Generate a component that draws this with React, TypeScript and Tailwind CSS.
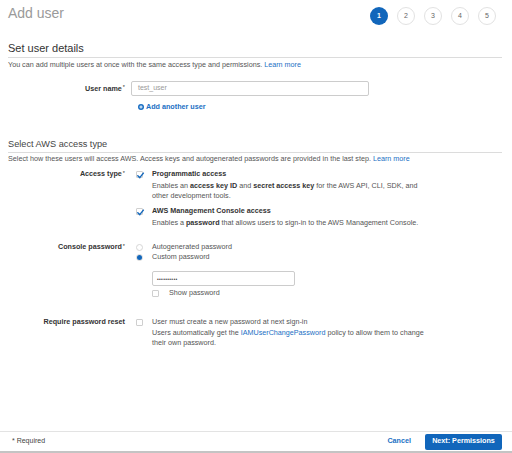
import React from 'react';

const BLUE = 'bg-[#1166bb]';

const Check = ({ checked }: { checked: boolean }) => (
  <span className="relative inline-block w-[7px] h-[7px] border border-[#cfcfcf] rounded-[1px] bg-white shrink-0">
    {checked && (
      <svg viewBox="0 0 10 10" className="absolute -left-[1px] -top-[1px] w-[9px] h-[9px]">
        <path d="M2 5.3 L4.2 7.4 L8.2 2.4" fill="none" stroke="#1166bb" strokeWidth="1.6" strokeLinecap="round" strokeLinejoin="round" />
      </svg>
    )}
  </span>
);

const Radio = ({ checked }: { checked: boolean }) => (
  <span className="inline-flex items-center justify-center w-[7px] h-[7px] rounded-full border border-[#d6d6d6] bg-white shrink-0">
    {checked && <span className={`w-[5px] h-[5px] rounded-full ${BLUE}`} />}
  </span>
);

const Label = ({ text, required }: { text: string; required?: boolean }) => (
  <div className="w-[117px] shrink-0 text-right font-bold text-[7.2px] leading-[10px] text-[#333] whitespace-nowrap">
    {text}
    {required && <span className="text-[5.5px] font-normal relative -top-[1.5px] ml-[1px]">*</span>}
  </div>
);

export default function App() {
  return (
    <div
      className="w-[512px] h-[453px] bg-white flex flex-col text-[#444] overflow-hidden"
      style={{ fontFamily: '"Liberation Sans", Arial, sans-serif' }}
    >
      <div className="flex-1 pl-[8px] pr-[10px]">
        {/* title + steps */}
        <div className="h-[32px] flex justify-between items-start">
          <h1 className="mt-[5px] text-[14px] leading-[16px] text-[#9a9a9a]">Add user</h1>
          <div className="mt-[7px] mr-[6px] flex gap-[9px]">
            {[1, 2, 3, 4, 5].map((n) => (
              <div
                key={n}
                className={
                  n === 1
                    ? `w-[18px] h-[18px] rounded-full ${BLUE} text-white font-bold text-[7px] flex items-center justify-center`
                    : 'w-[18px] h-[18px] rounded-full border border-[#e2e2e2] text-[#666] text-[7px] flex items-center justify-center'
                }
              >
                {n}
              </div>
            ))}
          </div>
        </div>

        {/* set user details */}
        <div className="pt-[10px] pb-[2px] border-b border-[#dcdcdc]">
          <h2 className="text-[11px] leading-[13px] text-[#333]">Set user details</h2>
        </div>
        <p className="mt-[2px] text-[7.2px] leading-[10px] text-[#555]">
          You can add multiple users at once with the same access type and permissions.{' '}
          <span className="text-[#1a6fc4]">Learn more</span>
        </p>

        <div className="mt-[11px] flex items-center gap-[6px]">
          <Label text="User name" required />
          <div className="w-[238px] h-[15px] border border-[#cccccc] rounded-[2px] pl-[6px] flex items-center text-[7px] text-[#999]">
            test_user
          </div>
        </div>
        <div className="mt-[6px] pl-[130px] flex items-center gap-[2px] text-[7.2px] leading-[10px] font-bold text-[#1a6fc4]">
          <svg viewBox="0 0 10 10" className="w-[6px] h-[6px]">
            <circle cx="5" cy="5" r="5" fill="#1a6fc4" />
            <path d="M5 2.3 V7.7 M2.3 5 H7.7" stroke="#fff" strokeWidth="1.6" />
          </svg>
          <span>Add another user</span>
        </div>

        {/* access type */}
        <div className="mt-[27px] pb-[2px] border-b border-[#dcdcdc]">
          <h2 className="text-[9.2px] leading-[11px] text-[#444]">Select AWS access type</h2>
        </div>
        <p className="mt-[1px] text-[7.2px] leading-[10px] text-[#555]">
          Select how these users will access AWS. Access keys and autogenerated passwords are provided in the last step.{' '}
          <span className="text-[#1a6fc4]">Learn more</span>
        </p>

        <div className="mt-[5px] flex items-start gap-[6px]">
          <Label text="Access type" required />
          <div className="text-[7.2px] leading-[10px] text-[#555]">
            <div className="flex items-center gap-[9px] pl-[5px]">
              <Check checked />
              <span className="font-bold text-[#333]">Programmatic access</span>
            </div>
            <div className="mt-[2px] pl-[21px] whitespace-nowrap">
              Enables an <b className="text-[#333]">access key ID</b> and <b className="text-[#333]">secret access key</b> for the AWS API, CLI, SDK, and
              <br />
              other development tools.
            </div>
            <div className="mt-[5px] flex items-center gap-[9px] pl-[5px]">
              <Check checked />
              <span className="font-bold text-[#333]">AWS Management Console access</span>
            </div>
            <div className="mt-[2px] pl-[21px] whitespace-nowrap">
              Enables a <b className="text-[#333]">password</b> that allows users to sign-in to the AWS Management Console.
            </div>
          </div>
        </div>

        <div className="mt-[14px] flex items-start gap-[6px]">
          <Label text="Console password" required />
          <div className="text-[7.2px] leading-[10px] text-[#555]">
            <div className="flex items-center gap-[9px] pl-[5px]">
              <Radio checked={false} />
              <span>Autogenerated password</span>
            </div>
            <div className="flex items-center gap-[9px] pl-[5px]">
              <Radio checked />
              <span>Custom password</span>
            </div>
            <div className="mt-[9px] ml-[21px] w-[143px] h-[15px] border border-[#cccccc] rounded-[2px] pl-[4px] flex items-center text-[5px] tracking-[0.3px] text-[#444]">
              ••••••••••
            </div>
            <div className="mt-[2px] pl-[21px] flex items-center gap-[10px]">
              <Check checked={false} />
              <span>Show password</span>
            </div>
          </div>
        </div>

        <div className="mt-[19px] flex items-start gap-[6px]">
          <Label text="Require password reset" />
          <div className="text-[7.2px] leading-[10.5px] text-[#555]">
            <div className="flex items-center gap-[9px] pl-[5px]">
              <Check checked={false} />
              <span>User must create a new password at next sign-in</span>
            </div>
            <div className="pl-[21px] whitespace-nowrap">
              Users automatically get the <span className="text-[#1a6fc4]">IAMUserChangePassword</span> policy to allow them to change
              <br />
              their own password.
            </div>
          </div>
        </div>
      </div>

      {/* footer */}
      <div className="h-[22px] border-t border-[#e3e3e3] border-b-2 border-b-[#c4c4c4] pl-[12px] pr-[10px] flex items-center justify-between">
        <span className="text-[7px] text-[#444]">* Required</span>
        <div className="flex items-center gap-[14px]">
          <span className="text-[7.2px] font-bold text-[#1a6fc4]">Cancel</span>
          <button className={`w-[77px] h-[16px] ${BLUE} rounded-[2px] text-white text-[7.2px] font-bold`}>
            Next: Permissions
          </button>
        </div>
      </div>
    </div>
  );
}
